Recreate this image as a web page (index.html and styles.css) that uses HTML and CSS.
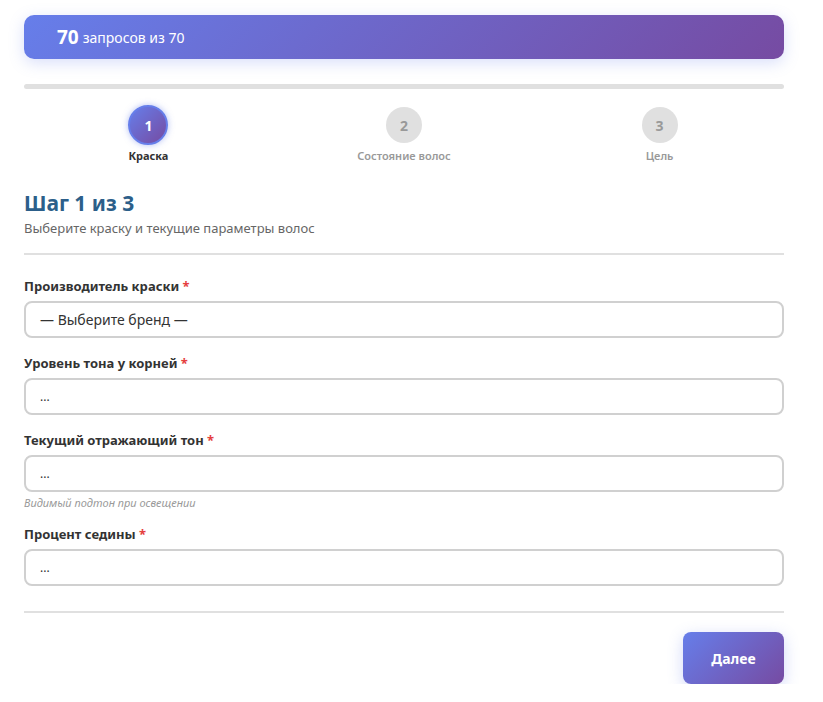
FILE: index.html
```
<!DOCTYPE html>
<html lang="ru">
<head>
<meta charset="UTF-8" />
<meta name="viewport" content="width=device-width, initial-scale=1" />
<title>Подбор краски</title>
<link rel="stylesheet" href="styles.css">
</head>
<body>

<div class="wizard">
  <div class="quota"><b>70</b> запросов из 70</div>

  <div class="progress"><div class="progress-fill"></div></div>

  <div class="steps">
    <div class="step active">
      <div class="step-num">1</div>
      <div class="step-label">Краска</div>
    </div>
    <div class="step">
      <div class="step-num">2</div>
      <div class="step-label">Состояние волос</div>
    </div>
    <div class="step">
      <div class="step-num">3</div>
      <div class="step-label">Цель</div>
    </div>
  </div>

  <div class="step-head">
    <h2>Шаг 1 из 3</h2>
    <p>Выберите краску и текущие параметры волос</p>
  </div>

  <form class="fields">
    <div class="field">
      <label>Производитель краски <span class="req">*</span></label>
      <div class="control">— Выберите бренд —</div>
    </div>
    <div class="field">
      <label>Уровень тона у корней <span class="req">*</span></label>
      <div class="control small">...</div>
    </div>
    <div class="field">
      <label>Текущий отражающий тон <span class="req">*</span></label>
      <div class="control small">...</div>
      <div class="hint">Видимый подтон при освещении</div>
    </div>
    <div class="field">
      <label>Процент седины <span class="req">*</span></label>
      <div class="control small">...</div>
    </div>
  </form>

  <div class="actions">
    <button class="next">Далее</button>
  </div>
</div>

</body>
</html>
```

FILE: styles.css
```
*, *::before, *::after {
  margin: 0; padding: 0; box-sizing: border-box;
}
body {
  font-family: 'Noto Sans', 'Open Sans', sans-serif;
  background: #fff;
  color: #333;
}

.wizard {
  width: 760px;
  margin-left: 24px;
  padding-top: 15px;
}

.quota {
  height: 44px;
  display: flex;
  align-items: center;
  padding-left: 33px;
  border-radius: 10px;
  background: linear-gradient(135deg, #667eea 0%, #764ba2 100%);
  box-shadow: 0 4px 15px rgba(102,126,234,0.25);
  color: #fff;
  font-size: 14px;
}
.quota b {
  font-size: 19px;
  font-weight: 700;
  margin-right: 4px;
}

.progress {
  margin-top: 25px;
  height: 5px;
  border-radius: 3px;
  background: #e0e0e0;
}
.progress-fill {
  width: 0;
  height: 100%;
}

.steps {
  display: flex;
  justify-content: space-around;
  margin-top: 16px;
}
.step {
  min-width: 80px;
  display: flex;
  flex-direction: column;
  align-items: center;
}
.step-num {
  width: 36px;
  height: 36px;
  border-radius: 50%;
  background: #e0e0e0;
  color: #999;
  font-weight: 700;
  font-size: 14px;
  display: flex;
  align-items: center;
  justify-content: center;
  margin-top: 2px;
}
.step-label {
  margin-top: 5px;
  font-size: 11px;
  font-weight: 600;
  color: #999;
}
.step.active .step-num {
  width: 40px;
  height: 40px;
  margin-top: 0;
  border: 2px solid #667eea;
  background: linear-gradient(135deg, #667eea 0%, #764ba2 100%);
  box-shadow: 0 0 6px rgba(102,126,234,0.5);
  color: #fff;
}
.step.active .step-label {
  margin-top: 3px;
  color: #333;
  font-weight: 700;
}

.step-head {
  margin-top: 26px;
  padding-bottom: 16px;
  border-bottom: 2px solid #e0e0e0;
}
.step-head h2 {
  font-size: 21px;
  font-weight: 700;
  color: #2c5f8a;
  line-height: 28px;
}
.step-head p {
  font-size: 13px;
  color: #666;
  margin-top: 2px;
}

.fields {
  padding-top: 22px;
  padding-bottom: 25px;
  border-bottom: 2px solid #e0e0e0;
  display: flex;
  flex-direction: column;
  gap: 16px;
}
.field label {
  display: block;
  font-size: 13px;
  font-weight: 700;
  color: #333;
  line-height: 18px;
  margin-bottom: 6px;
}
.req {
  color: #e53e3e;
}
.control {
  height: 37px;
  border: 2px solid #d0d0d0;
  border-radius: 8px;
  padding: 0 14px;
  display: flex;
  align-items: center;
  font-size: 14px;
  color: #333;
}
.control.small {
  font-size: 12px;
}
.hint {
  margin-top: 5px;
  font-size: 11px;
  line-height: 12px;
  font-style: italic;
  color: #999;
}

.actions {
  display: flex;
  justify-content: flex-end;
  padding-top: 19px;
}
.next {
  width: 101px;
  height: 52px;
  border: none;
  border-radius: 8px;
  background: linear-gradient(135deg, #667eea 0%, #764ba2 100%);
  box-shadow: 0 4px 15px rgba(102,126,234,0.3);
  color: #fff;
  font-family: inherit;
  font-size: 14px;
  font-weight: 700;
  cursor: pointer;
}
```
